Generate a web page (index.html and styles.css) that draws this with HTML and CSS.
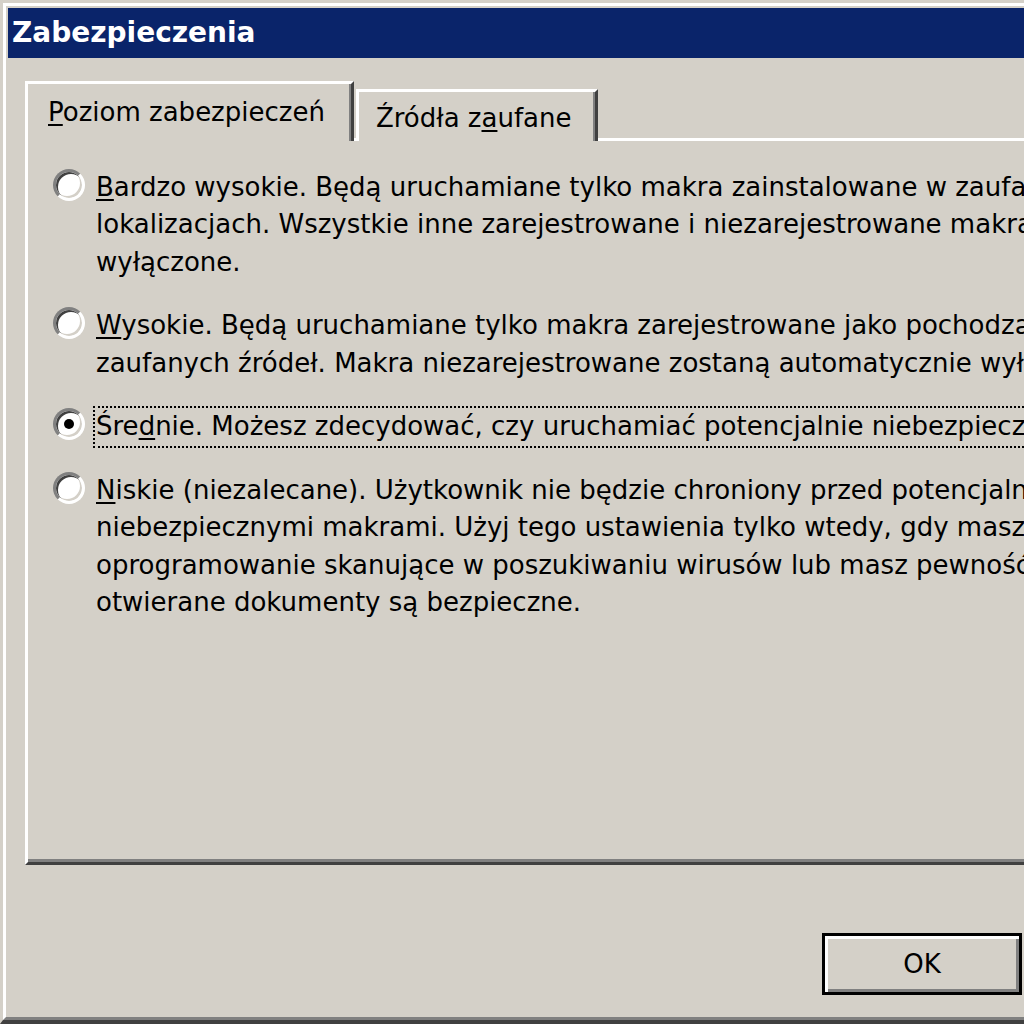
FILE: index.html
```html
<!DOCTYPE html>
<html lang="pl">
<head>
    <meta charset="UTF-8">
    <title>Zabezpieczenia</title>
    <link rel="stylesheet" href="styles.css">
</head>
<body>
    <div class="window">
        <div class="frame">
            <div class="titlebar">Zabezpieczenia</div>
            <div class="content">
                <div class="tabs">
                    <div class="tab active"><u>P</u>oziom zabezpieczeń</div>
                    <div class="tab">Źródła z<u>a</u>ufane</div>
                </div>
                <div class="panel">
                    <div class="option">
                        <span class="radio"></span>
                        <div class="label"><u>B</u>ardzo wysokie. Będą uruchamiane tylko makra zainstalowane w zaufanych<br>lokalizacjach. Wszystkie inne zarejestrowane i niezarejestrowane makra są<br>wyłączone.</div>
                    </div>
                    <div class="option">
                        <span class="radio"></span>
                        <div class="label"><u>W</u>ysokie. Będą uruchamiane tylko makra zarejestrowane jako pochodzące z<br>zaufanych źródeł. Makra niezarejestrowane zostaną automatycznie wyłączone.</div>
                    </div>
                    <div class="option">
                        <span class="radio checked"></span>
                        <div class="label focused">Śre<u>d</u>nie. Możesz zdecydować, czy uruchamiać potencjalnie niebezpieczne makra.</div>
                    </div>
                    <div class="option">
                        <span class="radio"></span>
                        <div class="label"><u>N</u>iskie (niezalecane). Użytkownik nie będzie chroniony przed potencjalnie<br>niebezpiecznymi makrami. Użyj tego ustawienia tylko wtedy, gdy masz<br>oprogramowanie skanujące w poszukiwaniu wirusów lub masz pewność, że<br>otwierane dokumenty są bezpieczne.</div>
                    </div>
                </div>
                <div class="buttons">
                    <button class="btn default">OK</button>
                    <button class="btn">Anuluj</button>
                </div>
            </div>
        </div>
    </div>
</body>
</html>
```

FILE: styles.css
```css
html, body {
    margin: 0;
    padding: 0;
    background: #d4d0c8;
    overflow: hidden;
}

body {
    width: 1024px;
    height: 1024px;
    font-family: "DejaVu Sans", Verdana, sans-serif;
    font-size: 26px;
    color: #000;
}

u {
    text-decoration-thickness: 2px;
    text-underline-offset: 3px;
}

/* window frame: light outer line, white bevel, dark bottom edge */
.window {
    width: 1255px;
    height: 1024px;
    box-sizing: border-box;
    border-top: 3px solid #d4d0c8;
    border-left: 3px solid #d4d0c8;
    border-bottom: 4px solid #404040;
}

.frame {
    height: 100%;
    box-sizing: border-box;
    border-top: 3px solid #fff;
    border-left: 3px solid #fff;
    border-bottom: 3px solid #808080;
    padding: 2px 0 0 2px;
    display: flex;
    flex-direction: column;
}

.titlebar {
    height: 50px;
    line-height: 50px;
    padding-left: 4px;
    background: #0a246a;
    color: #fff;
    font-weight: bold;
    font-size: 28px;
}

.content {
    padding: 23px 17px 0 17px;
    display: flex;
    flex-direction: column;
}

/* tabs */
.tabs {
    display: flex;
    align-items: flex-end;
    gap: 2px;
    position: relative;
    z-index: 1;
    margin-bottom: -3px;
}

.tab {
    background: #d4d0c8;
    border-top: 3px solid #fff;
    border-left: 3px solid #fff;
    border-right: 3px solid #404040;
    box-shadow: inset -2px 0 0 #808080;
    line-height: 37.5px;
    white-space: nowrap;
    padding: 8px 24px 3px 17px;
}

.tab.active {
    padding: 10px 26px 9px 20px;
}

/* tab page */
.panel {
    height: 727px;
    box-sizing: border-box;
    border-top: 3px solid #fff;
    border-left: 3px solid #fff;
    border-bottom: 3px solid #404040;
    box-shadow: inset 0 -3px 0 #808080;
    padding: 26px 0 0 25px;
    display: flex;
    flex-direction: column;
    gap: 22px;
}

.option {
    display: flex;
    align-items: flex-start;
}

.radio {
    flex: none;
    width: 32px;
    height: 32px;
    box-sizing: border-box;
    margin-top: 2px;
    border-radius: 50%;
    background: #fff;
    border: 3px solid;
    border-color: #808080 #fff #fff #808080;
    box-shadow: inset 2px 2px 0 #404040, inset -2px -2px 0 #d4d0c8;
    display: flex;
    align-items: center;
    justify-content: center;
}

.radio.checked::after {
    content: "";
    width: 10px;
    height: 10px;
    border-radius: 50%;
    background: #000;
}

.label {
    margin-left: 8px;
    padding: 1px 2px;
    border: 1px dotted transparent;
    line-height: 37.5px;
    white-space: nowrap;
}

.label.focused {
    border: 2px dotted #000;
    padding: 0 1px;
}

/* dialog buttons */
.buttons {
    display: flex;
    justify-content: flex-end;
    gap: 16px;
    margin-top: 68px;
}

.btn {
    width: 200px;
    height: 62px;
    background: #d4d0c8;
    font-family: inherit;
    font-size: 26px;
    color: #000;
    border: 2px solid #fff;
    border-right-color: #404040;
    border-bottom-color: #404040;
    box-shadow: inset -2px -2px 0 #808080;
}

.btn.default {
    border: 3px solid #000;
    box-shadow: inset 3px 3px 0 #fff, inset -3px -3px 0 #808080;
}
```
